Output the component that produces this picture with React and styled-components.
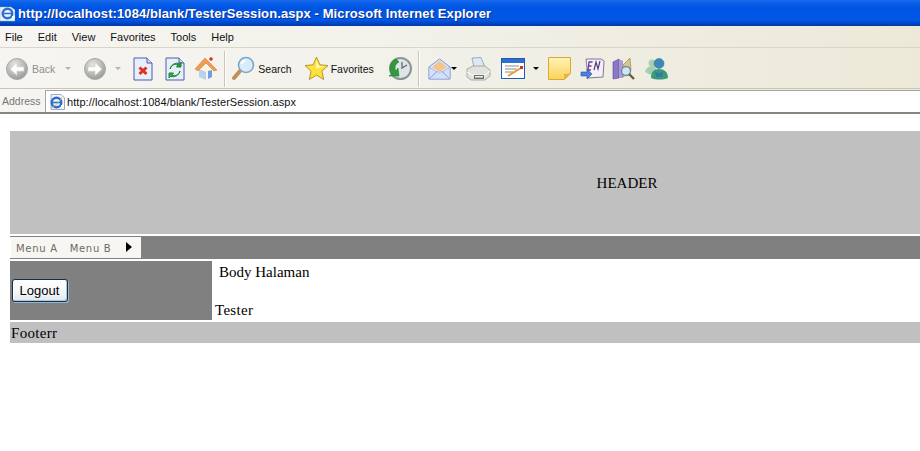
import React from 'react'
import styled, { createGlobalStyle } from 'styled-components'

const Global = createGlobalStyle`
  html, body {
    margin: 0;
    padding: 0;
    background: #fff;
    overflow: hidden;
  }
`

const Window = styled.div`
  width: 920px;
  height: 451px;
  overflow: hidden;
  display: flex;
  flex-direction: column;
  font-family: 'Liberation Sans', Arial, sans-serif;
`

const TitleBar = styled.div`
  height: 26px;
  flex: none;
  display: flex;
  align-items: center;
  gap: 3px;
  box-sizing: border-box;
  background: linear-gradient(180deg, #1b6cf0 0, #0a5fe6 3px, #0054e3 8px, #0058e6 20px, #0047c8 23px, #0038a8 26px);
  color: #fff;
  font-size: 13px;
  font-weight: bold;
  letter-spacing: 0.09px;
  text-shadow: 1px 1px 0 #0f2f8c;
`

const Chrome = styled.div`
  background: linear-gradient(90deg, #f6f5f1 0, #f2f1ea 400px, #ece9d8 100%);
`

const MenuBar = styled(Chrome)`
  height: 22px;
  flex: none;
  display: flex;
  align-items: center;
  gap: 15px;
  box-sizing: border-box;
  padding: 1px 0 0 5px;
  border-bottom: 1px solid #d9d6c8;
  font-size: 11px;
  color: #111;
`

const MenuItem = styled.span`
  display: block;
`

const Toolbar = styled(Chrome)`
  height: 41px;
  flex: none;
  display: flex;
  align-items: center;
  box-sizing: border-box;
  padding: 1px 0 0 6px;
  border-bottom: 1px solid #c9c6b8;
  font-size: 10.5px;
  color: #111;
`

const Tool = styled.div`
  display: flex;
  align-items: center;
  flex: none;
  margin-left: ${p => p.$gap || 0}px;
  gap: ${p => p.$inner || 2}px;
  color: ${p => (p.$off ? '#8f8f8f' : 'inherit')};
`

const Separator = styled.div`
  width: 1px;
  height: 36px;
  flex: none;
  margin-left: ${p => p.$gap}px;
  background: #c9c6b8;
  box-shadow: 1px 0 0 #fff;
`

const Caret = styled.span`
  display: block;
  flex: none;
  width: 0;
  height: 0;
  margin-left: ${p => p.$gap || 0}px;
  border-left: 3px solid transparent;
  border-right: 3px solid transparent;
  border-top: 3px solid ${p => (p.$off ? '#b5b5b0' : '#000')};
`

const AddressBar = styled(Chrome)`
  height: 23px;
  flex: none;
  display: flex;
  align-items: center;
  font-size: 11px;
`

const AddressLabel = styled.span`
  width: 45px;
  flex: none;
  padding-left: 2px;
  box-sizing: border-box;
  font-size: 10.5px;
  color: #777;
`

const AddressField = styled.div`
  flex: 1;
  height: 22px;
  display: flex;
  align-items: center;
  gap: 2px;
  padding: 2px 0 0 3px;
  box-sizing: border-box;
  background: #fff;
  border-top: 1px solid #a5a5a0;
  border-left: 1px solid #a5a5a0;
  color: #111;
  letter-spacing: 0.06px;
`

const BottomEdge = styled.div`
  height: 2px;
  flex: none;
  background: #85857d;
`

const Page = styled.div`
  flex: 1;
  padding: 17px 0 0 10px;
  overflow: hidden;
  background: #fff;
  font-family: 'Liberation Serif', 'Times New Roman', serif;
  font-size: 15px;
  color: #000;
`

const Layout = styled.div`
  width: 1234px;
  display: flex;
  flex-direction: column;
  gap: 2px;
`

const Header = styled.div`
  height: 103px;
  box-sizing: border-box;
  padding-top: 2px;
  display: flex;
  align-items: center;
  justify-content: center;
  background: #c0c0c0;
`

const NavRow = styled.div`
  height: 23px;
  display: flex;
  background: #808080;
`

const Nav = styled.div`
  width: 131px;
  height: 21px;
  display: flex;
  align-items: center;
  gap: 12px;
  box-sizing: border-box;
  padding: 2px 0 0 5px;
  margin-top: 1px;
  background: #f7f6f3;
  border-left: 1px solid #fff;
  font-family: 'DejaVu Sans', Verdana, sans-serif;
  font-size: 10px;
  letter-spacing: 0.7px;
  color: #6e6a62;
`

const NavArrow = styled.span`
  width: 0;
  height: 0;
  margin: -3px 0 0 3px;
  border-top: 5px solid transparent;
  border-bottom: 5px solid transparent;
  border-left: 6px solid #000;
`

const BodyRow = styled.div`
  height: 59px;
  display: flex;
`

const Sidebar = styled.div`
  width: 202px;
  flex: none;
  display: flex;
  align-items: center;
  padding-left: 2px;
  box-sizing: border-box;
  background: #808080;
`

const LogoutButton = styled.button`
  width: 56px;
  height: 23px;
  padding: 0 1px 1px 0;
  border: 1px solid #14304c;
  border-radius: 3px;
  background: linear-gradient(180deg, #ffffff 0, #f3f6f8 60%, #dfe9ee 100%);
  box-shadow: inset -1px -1px 0 #a9c6dc, inset 1px 1px 0 #fff, 1px 1px 0 #9db4c6;
  font-family: 'Liberation Sans', Arial, sans-serif;
  font-size: 13px;
  color: #000;
`

const Content = styled.div`
  flex: 1;
  display: flex;
  flex-direction: column;
  justify-content: space-between;
  padding-left: 3px;
  line-height: 19px;
`

const Heading = styled.div`
  padding: 2px 0 0 4px;
  height: 21px;
`

const Spaced = styled.div`
  letter-spacing: 0.3px;
`

const Footer = styled.div`
  height: 21px;
  line-height: 22px;
  letter-spacing: 0.3px;
  padding-left: 1px;
  background: #c0c0c0;
`

const Icon = styled.svg`
  display: block;
  flex: none;
`

const NavCircle = ({ flip }) => (
  <Icon width="22" height="22" viewBox="0 0 22 22">
    <defs>
      <radialGradient id="gr" cx="40%" cy="30%" r="75%">
        <stop offset="0" stopColor="#e6e6e3" />
        <stop offset="1" stopColor="#979793" />
      </radialGradient>
    </defs>
    <circle cx="11" cy="11" r="10.5" fill="url(#gr)" stroke="#a8a8a4" />
    <path
      d={flip ? 'M4 8.800h7V4.500l7 6.500-7 6.500v-4.300H4z' : 'M18 8.800h-7V4.500L4 11l7 6.500v-4.300h7z'}
      fill="#fdfdfc"
      stroke="#c4c4c0"
      strokeWidth=".5"
    />
  </Icon>
)

const PageIcon = ({ children }) => (
  <Icon width="20" height="24" viewBox="0 0 20 24">
    <path d="M1 1h13l5 5v17H1z" fill="#e9eefb" stroke="#4a5cb0" />
    <path d="M14 1v5h5" fill="#cfd8f4" stroke="#4a5cb0" />
    {children}
  </Icon>
)

const StopIcon = () => (
  <PageIcon>
    <path d="M6.500 10.500l7 6.500M13.500 10.500l-7 6.500" stroke="#e0301c" strokeWidth="3" />
  </PageIcon>
)

const RefreshIcon = () => (
  <PageIcon>
    <path d="M5 12a5.500 5.500 0 0 1 8-4l-1.500 2H16V5l-1.500 1.500A7.500 7.500 0 0 0 5 12z" fill="#1e9a34" stroke="#1a8a2e" strokeWidth="1" />
    <path d="M15 14a5.500 5.500 0 0 1-8 4l1.500-2H4v5l1.500-1.500A7.500 7.500 0 0 0 15 14z" fill="#2db03e" stroke="#1a8a2e" strokeWidth="1" />
  </PageIcon>
)

const HomeIcon = () => (
  <Icon width="24" height="25" viewBox="0 0 24 25">
    <path d="M5 12l8-6 8 7v8l-7 3-9-3z" fill="#f7f4e8" />
    <path d="M5 13l7 3v8l-7-3z" fill="#b9d0ee" />
    <path d="M1 13L11 2l12 12-3 1-8-8-8 8z" fill="#f29a50" stroke="#d98238" strokeWidth=".6" />
    <path d="M14 15l4-1v7l-4 2z" fill="#6f9fdc" />
    <circle cx="17" cy="3" r="1.800" fill="#cc3a1c" />
  </Icon>
)

const SearchIcon = () => (
  <Icon width="25" height="25" viewBox="0 0 25 25">
    <path d="M9 15L3 22" stroke="#c09058" strokeWidth="4" strokeLinecap="round" />
    <circle cx="15" cy="9" r="7.500" fill="#d9ecfb" stroke="#7aa6cc" strokeWidth="1.600" />
    <path d="M10.500 8a5 5 0 0 1 4-3.500" stroke="#fff" strokeWidth="2" fill="none" />
  </Icon>
)

const StarIcon = () => (
  <Icon width="25" height="25" viewBox="0 0 25 25">
    <path
      d="M12.500 1l3.400 7.800 8.100.8-6.100 5.500 1.800 8.400-7.200-4.400-7.200 4.400 1.800-8.400L1 9.600l8.100-.8z"
      fill="#fde13f"
      stroke="#b8962a"
    />
    <path d="M12.500 4l2.500 6 6 .6-9 1.800z" fill="#fff7b8" />
  </Icon>
)

const HistoryIcon = () => (
  <Icon width="24" height="24" viewBox="0 0 24 24">
    <circle cx="12.500" cy="11.500" r="10.500" fill="#dfe5e6" stroke="#8b9498" strokeWidth="2" />
    <path d="M14 5v6l5-3" stroke="#5f6b70" strokeWidth="1.300" fill="none" />
    <path d="M8 2A10 10 0 0 0 4 17l-3 2h10l-1-8-2 3a6 6 0 0 1 3-9z" fill="#2f9a3c" stroke="#237a2e" strokeWidth=".6" />
  </Icon>
)

const MailIcon = () => (
  <Icon width="23" height="23" viewBox="0 0 23 23">
    <path d="M1 10L11.500 2 22 10v12H1z" fill="#dbe5fa" stroke="#7f9ad6" />
    <path d="M4 10l7.500-6 7.500 6-7.500 5z" fill="#f5c48c" />
    <path d="M1 22l8-8 2.500 2 2.500-2 8 8zM1 10l8 5-8 7zM22 10l-8 5 8 7z" fill="#d3e0fa" stroke="#8aa3da" strokeWidth=".6" />
  </Icon>
)

const PrintIcon = () => (
  <Icon width="26" height="24" viewBox="0 0 26 24">
    <path d="M7 1l9-.500 4 10H9z" fill="#dce8f6" stroke="#8a9bb4" strokeWidth=".8" />
    <path d="M2 12l6-3h12l5 4v6l-5 4H6l-4-3z" fill="#e2e2de" stroke="#9c9c96" strokeWidth=".8" />
    <path d="M2 15l5 3h13l5-4" stroke="#fff" fill="none" />
    <rect x="9" y="18" width="10" height="4" fill="#6f6f68" />
    <rect x="10" y="19" width="8" height="1.500" fill="#f2f2ee" />
  </Icon>
)

const EditIcon = () => (
  <Icon width="24" height="21" viewBox="0 0 24 21">
    <rect x=".5" y=".5" width="23" height="20" fill="#fff" stroke="#1d5bb0" />
    <rect x="1" y="1" width="22" height="4" fill="#2c6fd0" />
    <path d="M4 8h14M4 11h12M4 14h8" stroke="#8a8a8a" />
    <path d="M7 18l13-8" stroke="#e0a030" strokeWidth="2" />
    <rect x="19" y="8" width="3" height="3" fill="#d0303a" />
  </Icon>
)

const NoteIcon = () => (
  <Icon width="23" height="23" viewBox="0 0 23 23">
    <defs>
      <linearGradient id="nt" x1="0" y1="0" x2="0" y2="1">
        <stop offset="0" stopColor="#fff3b5" />
        <stop offset="1" stopColor="#fbd25c" />
      </linearGradient>
    </defs>
    <path d="M.5.500h22v16l-6 6H.5z" fill="url(#nt)" stroke="#d8a830" />
    <path d="M22 16.500l-6 .5v5.500z" fill="#e6b53e" />
  </Icon>
)

const OneNoteIcon = () => (
  <Icon width="25" height="24" viewBox="0 0 25 24">
    <path d="M6 2h15l3 2-1 16-15 1z" fill="#f4f0f6" stroke="#86769a" />
    <path d="M9 5l-1 8M8.500 5h4M8 9h3.500M8 13h3" stroke="#6a3f8e" strokeWidth="1.300" fill="none" />
    <path d="M14 13l2-8 2 7 2-8" stroke="#5c3a86" strokeWidth="1.200" fill="none" />
    <path d="M1 15h6v-3l5 5-5 5v-3H1z" fill="#4f7fd8" stroke="#2c52a8" strokeWidth=".6" />
  </Icon>
)

const ResearchIcon = () => (
  <Icon width="23" height="24" viewBox="0 0 23 24">
    <path d="M1 5l6-3v19l-6 1z" fill="#8b78c8" stroke="#57478f" strokeWidth=".6" />
    <path d="M7 2l4 2v17l-4 0z" fill="#a79add" />
    <path d="M11 20V8l7-7 1 12z" fill="#d8c888" stroke="#8a7c4a" strokeWidth=".6" />
    <circle cx="14" cy="14" r="4.500" fill="#cfe6f2" stroke="#6e8aa0" strokeWidth="1.400" />
    <path d="M17 17l5 5" stroke="#6a5a3a" strokeWidth="2.400" />
  </Icon>
)

const MessengerIcon = () => (
  <Icon width="25" height="23" viewBox="0 0 25 23">
    <circle cx="8" cy="6" r="3.500" fill="#a9d0b0" />
    <path d="M1 15c1-4 4-6 7-6s4 2 4 4l-5 5z" fill="#a5cfae" />
    <circle cx="15" cy="6.500" r="5" fill="#3f88b8" stroke="#2c6b90" strokeWidth=".5" />
    <path d="M7 21c0-6 3-9 8-9s9 3 9 9c-5 2-12 2-17 0z" fill="#3b9a78" />
    <path d="M11 14c3 3 6 3 8 0l-1 6h-6z" fill="#2f7ea0" />
  </Icon>
)

const IeGlyph = () => (
  <>
    <circle cx="7.500" cy="8.500" r="4.800" fill="none" stroke="#2a6fd0" strokeWidth="2.400" />
    <path d="M3.500 8.500h8" stroke="#2a6fd0" strokeWidth="1.600" />
    <path d="M12 11h3v2h-3z" fill="#fff" />
  </>
)

const IeIcon = () => (
  <Icon width="16" height="16" viewBox="0 0 16 16">
    <path d="M2 .5h10l3.500 3.500v11.500H2z" fill="#f2f5fb" stroke="#9aa9c8" />
    <IeGlyph />
    <path d="M1 14c3 0 9-5 12-11" stroke="#d8b04a" strokeWidth=".8" fill="none" />
  </Icon>
)

const TitleIcon = () => (
  <Icon width="15" height="17" viewBox="0 0 15 17">
    <path d="M0 2h11l4 3v11H0z" fill="#f2f5fb" stroke="#8aa4cc" strokeWidth=".5" />
    <IeGlyph />
  </Icon>
)

export default function App() {
  return (
    <Window>
      <Global />
      <TitleBar>
        <TitleIcon />
        <span>http://localhost:1084/blank/TesterSession.aspx - Microsoft Internet Explorer</span>
      </TitleBar>
      <MenuBar>
        <MenuItem>File</MenuItem>
        <MenuItem>Edit</MenuItem>
        <MenuItem>View</MenuItem>
        <MenuItem>Favorites</MenuItem>
        <MenuItem>Tools</MenuItem>
        <MenuItem>Help</MenuItem>
      </MenuBar>
      <Toolbar>
        <Tool $off $inner={4}>
          <NavCircle />
          <span>Back</span>
        </Tool>
        <Caret $off $gap={10} />
        <Tool $gap={13}>
          <NavCircle flip />
        </Tool>
        <Caret $off $gap={9} />
        <Tool $gap={12}>
          <StopIcon />
        </Tool>
        <Tool $gap={12}>
          <RefreshIcon />
        </Tool>
        <Tool $gap={9}>
          <HomeIcon />
        </Tool>
        <Separator $gap={6} />
        <Tool $gap={6}>
          <SearchIcon />
          <span>Search</span>
        </Tool>
        <Tool $gap={12}>
          <StarIcon />
          <span>Favorites</span>
        </Tool>
        <Tool $gap={14}>
          <HistoryIcon />
        </Tool>
        <Separator $gap={6} />
        <Tool $gap={9}>
          <MailIcon />
        </Tool>
        <Caret />
        <Tool $gap={8}>
          <PrintIcon />
        </Tool>
        <Tool $gap={10}>
          <EditIcon />
        </Tool>
        <Caret $gap={8} />
        <Tool $gap={9}>
          <NoteIcon />
        </Tool>
        <Tool $gap={9}>
          <OneNoteIcon />
        </Tool>
        <Tool $gap={7}>
          <ResearchIcon />
        </Tool>
        <Tool $gap={9}>
          <MessengerIcon />
        </Tool>
      </Toolbar>
      <AddressBar>
        <AddressLabel>Address</AddressLabel>
        <AddressField>
          <IeIcon />
          <span>http://localhost:1084/blank/TesterSession.aspx</span>
        </AddressField>
      </AddressBar>
      <BottomEdge />
      <Page>
        <Layout>
          <Header>HEADER</Header>
          <NavRow>
            <Nav>
              <span>Menu A</span>
              <span>Menu B</span>
              <NavArrow />
            </Nav>
          </NavRow>
          <BodyRow>
            <Sidebar>
              <LogoutButton type="button">Logout</LogoutButton>
            </Sidebar>
            <Content>
              <Heading>Body Halaman</Heading>
              <Spaced>Tester</Spaced>
            </Content>
          </BodyRow>
          <Footer>Footerr</Footer>
        </Layout>
      </Page>
    </Window>
  )
}
